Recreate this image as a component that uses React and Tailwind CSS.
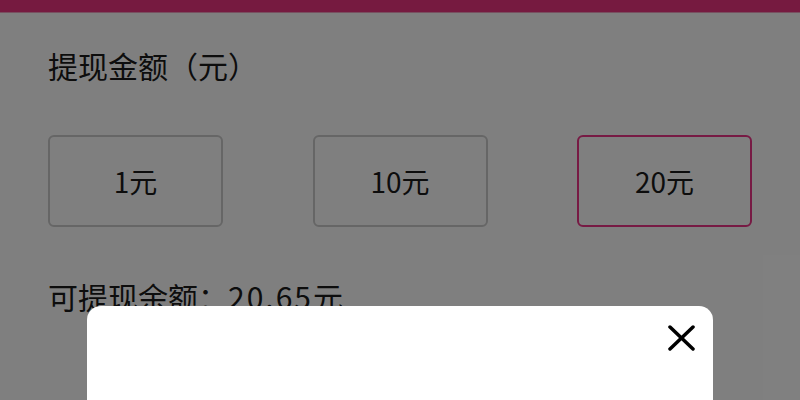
import React, { useState } from 'react';

const AMOUNTS = [1, 10, 20];

export default function App() {
  const [selected, setSelected] = useState(20);

  return (
    <div
      className="relative h-[400px] w-[800px] overflow-hidden bg-white text-[#1a1a1a]"
      style={{ fontFamily: '"Noto Sans CJK SC", "Noto Sans", sans-serif' }}
    >
      {/* Top bar */}
      <div className="h-[13px] border-b border-[#f0a0c0] bg-[#ec3480]" />

      <div className="px-12">
        <p className="mt-[32px] text-[30px] leading-[40px]">提现金额（元）</p>

        <div className="mt-[50px] flex justify-between">
          {AMOUNTS.map(a => (
            <button
              key={a}
              onClick={() => setSelected(a)}
              className={`flex h-[92px] w-[175px] items-center justify-center rounded-[6px] border-2 text-[28px] ${
                selected === a ? 'border-[#ee3488]' : 'border-[#cccccc]'
              }`}
            >
              {a}元
            </button>
          ))}
        </div>

        <p className="mt-[49px] text-[30px] leading-[40px]">
          可提现余额：<span className="tracking-[2px]">20.65</span>元
        </p>
      </div>

      {/* Dim overlay */}
      <div className="absolute inset-0 bg-black/50" />

      {/* Modal */}
      <div className="absolute left-[87px] top-[306px] h-[300px] w-[626px] rounded-[14px] bg-white">
        <button className="absolute right-[18px] top-[19px] text-black" aria-label="关闭">
          <svg width="27" height="26" viewBox="0 0 27 26" fill="none" stroke="currentColor" strokeWidth="3.5" strokeLinecap="round">
            <line x1="2" y1="2" x2="25" y2="24" />
            <line x1="25" y1="2" x2="2" y2="24" />
          </svg>
        </button>
      </div>
    </div>
  );
}
